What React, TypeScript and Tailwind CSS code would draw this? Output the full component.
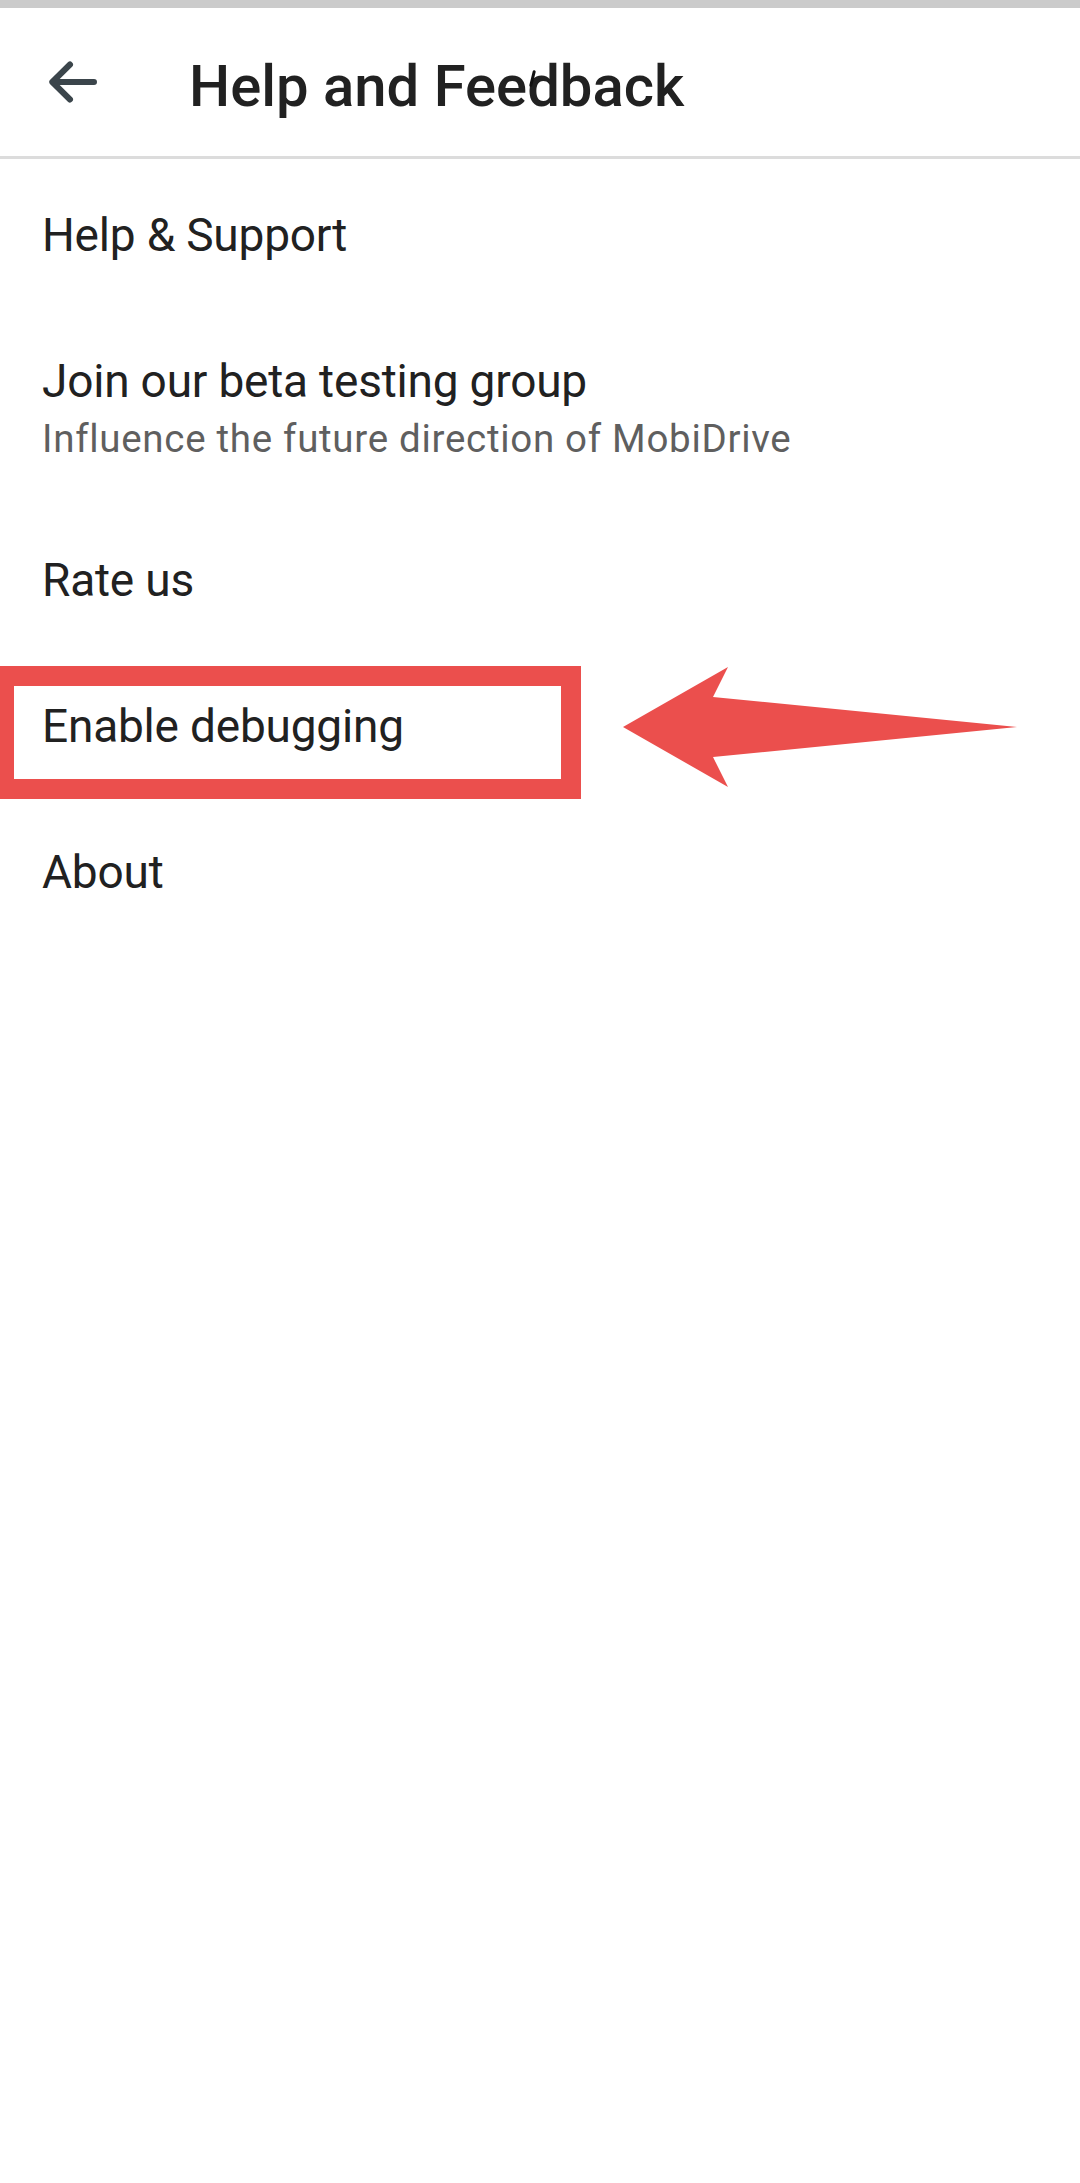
import React from "react";

const items = [
  { title: "Help & Support" },
  { title: "Join our beta testing group", subtitle: "Influence the future direction of MobiDrive" },
  { title: "Rate us" },
  { title: "Enable debugging", highlight: true },
  { title: "About" },
];

function BackArrow() {
  return (
    <svg width="60" height="60" viewBox="0 0 60 60" fill="none" className="shrink-0">
      <path
        d="M27 12.5 9.3 30 27 47.5M9.3 30H51"
        stroke="#3b454b"
        strokeWidth="6"
        strokeLinecap="round"
        strokeLinejoin="round"
      />
    </svg>
  );
}

function PointerArrow() {
  return (
    <svg width="394" height="120" viewBox="0 0 394 120" className="absolute left-[623px] top-[14px]">
      <polygon points="0,60 105,0 90,30 394,60 90,90 105,120" fill="#eb4f4d" />
    </svg>
  );
}

export default function App() {
  return (
    <div
      className="min-h-[2183px] w-[1080px] bg-white text-[#212121]"
      style={{ fontFamily: "Roboto, 'Noto Sans', sans-serif" }}
    >
      {/* status strip */}
      <div className="h-[8px] bg-[#cbcbcb]" />

      {/* toolbar */}
      <div className="relative flex h-[148px] items-start">
        <div className="ml-[43px] mt-[44px]">
          <BackArrow />
        </div>
        <h1 className="ml-[86px] mt-[49px] text-[58px] font-medium leading-[58px] text-[#212121]">
          Help and Feedback
        </h1>
        {/* touch mark */}
        <span className="absolute left-[531px] top-[62px] h-[17px] w-[3px] rotate-[14deg] rounded-full bg-[#111]" />
      </div>
      <div className="h-[3px] bg-[#dcdcdc]" />

      {/* list */}
      <div className="flex flex-col pt-[3px]">
        {items.map((item) => (
          <div key={item.title} className="relative px-[42px] py-[45px]">
            <div className="text-[46px] leading-[56px] tracking-[-0.2px] text-[#212121]">{item.title}</div>
            {item.subtitle && (
              <div className="mt-[7px] text-[38.5px] leading-[46px] tracking-[0.7px] text-[#5f5f5f]">
                {item.subtitle}
              </div>
            )}
            {item.highlight && (
              <>
                <div className="absolute left-[-6px] top-[13px] h-[133px] w-[587px] border-[20px] border-[#eb4f4d]" />
                <PointerArrow />
              </>
            )}
          </div>
        ))}
      </div>
    </div>
  );
}
